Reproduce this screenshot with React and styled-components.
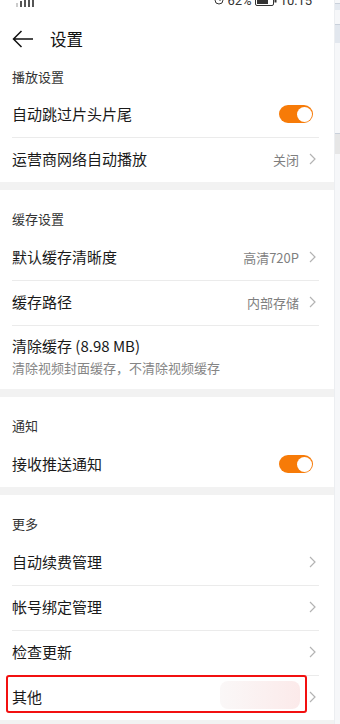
import styled, { createGlobalStyle } from 'styled-components'

const GlobalStyle = createGlobalStyle`
  html, body {
    margin: 0;
    padding: 0;
    background: #f2f2f2;
  }
  body {
    font-family: "Noto Sans CJK SC", "Noto Sans", sans-serif;
    -webkit-font-smoothing: antialiased;
  }
`

function Chevron() {
  return (
    <svg width="7" height="12" viewBox="0 0 7 12">
      <polyline points="1,1 6,6 1,11" fill="none" stroke="#b3b3b3" strokeWidth="1.2" />
    </svg>
  )
}

function BackArrow() {
  return (
    <svg width="22" height="18" viewBox="0 0 22 18">
      <path d="M9.5 1 L1.5 9 L9.5 17 M1.5 9 H21" fill="none" stroke="#111" strokeWidth="1.5" />
    </svg>
  )
}

function Clock() {
  return (
    <svg width="10" height="10" viewBox="0 0 10 10">
      <circle cx="5" cy="5" r="4" fill="none" stroke="#333" strokeWidth="1" />
      <path d="M5 2.5 V5 H7" fill="none" stroke="#333" strokeWidth="1" />
    </svg>
  )
}

function Battery() {
  return (
    <svg width="22" height="11" viewBox="0 0 22 11">
      <rect x="0.5" y="0.5" width="18" height="10" rx="1.5" fill="none" stroke="#333" />
      <rect x="2" y="2" width="11" height="7" fill="#333" />
      <rect x="19.5" y="3.5" width="2" height="4" fill="#333" />
    </svg>
  )
}

function SignalBars() {
  return (
    <svg width="18" height="14" viewBox="0 0 18 14">
      <rect x="0" y="10" width="2" height="4" fill="#ccc" />
      <rect x="4" y="8" width="2" height="6" fill="#555" />
      <rect x="8" y="5" width="2" height="9" fill="#555" />
      <rect x="12" y="2" width="2" height="12" fill="#555" />
      <rect x="16" y="0" width="2" height="14" fill="#555" />
    </svg>
  )
}

function Row({ title, value, toggle, chevron, divider, subtitle }) {
  return (
    <StyledRow $divider={divider} $tall={!!subtitle}>
      <RowText>
        <RowTitle>{title}</RowTitle>
        {subtitle && <RowSubtitle>{subtitle}</RowSubtitle>}
      </RowText>
      {value && <RowValue>{value}</RowValue>}
      {toggle && (
        <Toggle>
          <Knob />
        </Toggle>
      )}
      {chevron && <Chevron />}
    </StyledRow>
  )
}

export default function App() {
  return (
    <>
      <GlobalStyle />
      <Frame>
        <Screen>
          <Section>
            <StatusBar>
              <StatusInner>
                <SignalBars />
                <StatusRight>
                  <Clock />
                  <span>62%</span>
                  <Battery />
                  <span>10:15</span>
                </StatusRight>
              </StatusInner>
            </StatusBar>
            <Header>
              <BackArrow />
              <HeaderTitle>设置</HeaderTitle>
            </Header>
            <SectionLabel $first>播放设置</SectionLabel>
            <Row title="自动跳过片头片尾" toggle />
            <Row title="运营商网络自动播放" value="关闭" chevron divider />
          </Section>

          <Section>
            <SectionLabel>缓存设置</SectionLabel>
            <Row title="默认缓存清晰度" value="高清720P" chevron />
            <Row title="缓存路径" value="内部存储" chevron divider />
            <Row title="清除缓存 (8.98 MB)" subtitle="清除视频封面缓存，不清除视频缓存" divider />
          </Section>

          <Section>
            <SectionLabel>通知</SectionLabel>
            <Row title="接收推送通知" toggle />
          </Section>

          <Section>
            <SectionLabel>更多</SectionLabel>
            <Row title="自动续费管理" chevron />
            <Row title="帐号绑定管理" chevron divider />
            <Row title="检查更新" chevron divider />
            <HighlightWrap>
              <Row title="其他" chevron divider />
              <Watermark />
              <RedBox />
            </HighlightWrap>
          </Section>
        </Screen>
        <BehindStrip>
          <StripLine $h={3} />
          <StripBand $h={6} $c="#e4e9f0" />
          <StripLine $h={14} />
          <StripBand $h={18} $c="#e2e7ee" />
          <StripLine $h={90} />
          <StripBand $h={20} $c="#e6e6e6" />
        </BehindStrip>
      </Frame>
    </>
  )
}

const Frame = styled.div`
  display: flex;
  width: 340px;
  min-height: 724px;
`

const Screen = styled.div`
  width: 334px;
  display: flex;
  flex-direction: column;
  gap: 8px;
  background: #f2f2f2;
  padding-bottom: 12px;
`

const BehindStrip = styled.div`
  flex: 1;
  display: flex;
  flex-direction: column;
  background: #f6f7f9;
  border-left: 1px solid #eceef1;
`

const StripLine = styled.div`
  height: ${(p) => p.$h}px;
  border-bottom: 1px solid #c9d0da;
`

const StripBand = styled.div`
  height: ${(p) => p.$h}px;
  background: ${(p) => p.$c};
`

const Section = styled.section`
  background: #fff;
  display: flex;
  flex-direction: column;
`

const StatusBar = styled.div`
  height: 12px;
  overflow: hidden;
`

const StatusInner = styled.div`
  display: flex;
  justify-content: space-between;
  align-items: center;
  padding: 0 22px 0 16px;
  margin-top: -8px;
  height: 16px;
  font-family: Roboto, "Liberation Sans", sans-serif;
  font-size: 13px;
  color: #333;
`

const StatusRight = styled.div`
  display: flex;
  align-items: center;
  gap: 3px;
`

const Header = styled.header`
  height: 54px;
  display: flex;
  align-items: center;
  gap: 16px;
  padding-left: 12px;
`

const HeaderTitle = styled.h1`
  margin: 0;
  font-size: 16.5px;
  font-weight: 400;
  color: #111;
  line-height: 20px;
`

const SectionLabel = styled.div`
  height: ${(p) => (p.$first ? 26 : 45)}px;
  box-sizing: border-box;
  padding: ${(p) => (p.$first ? 2 : 20)}px 12px 0;
  font-size: 13px;
  line-height: 18px;
  color: #333;
`

const StyledRow = styled.div`
  height: ${(p) => (p.$tall ? 64 : 45)}px;
  box-sizing: border-box;
  margin: 0 15px 0 12px;
  padding: 0 3px 2px 0;
  border-top: 1px solid ${(p) => (p.$divider ? '#ebebeb' : 'transparent')};
  display: flex;
  align-items: center;
  gap: 10px;
`

const RowText = styled.div`
  flex: 1;
  display: flex;
  flex-direction: column;
  gap: 3px;
`

const RowTitle = styled.div`
  font-size: 15px;
  line-height: 20px;
  color: #1a1a1a;
`

const RowSubtitle = styled.div`
  font-size: 13px;
  line-height: 18px;
  color: #858585;
`

const RowValue = styled.div`
  font-size: 13px;
  color: #7f7f7f;
`

const Toggle = styled.div`
  width: 34px;
  height: 18px;
  margin-right: 3px;
  border-radius: 9px;
  background: #f77b08;
  display: flex;
  align-items: center;
  justify-content: flex-end;
  padding-right: 1.5px;
  box-sizing: border-box;
`

const Knob = styled.div`
  width: 15px;
  height: 15px;
  border-radius: 50%;
  background: #fff;
`

const HighlightWrap = styled.div`
  position: relative;
`

const RedBox = styled.div`
  position: absolute;
  left: 6px;
  top: 0;
  width: 301px;
  height: 38px;
  border: 2px solid #f21010;
  border-radius: 3px;
  box-sizing: border-box;
  pointer-events: none;
`

const Watermark = styled.div`
  position: absolute;
  left: 220px;
  top: 6px;
  width: 80px;
  height: 28px;
  border-radius: 8px;
  background: linear-gradient(90deg, rgba(245, 240, 240, 0.5), rgba(250, 225, 225, 0.7));
  pointer-events: none;
`
